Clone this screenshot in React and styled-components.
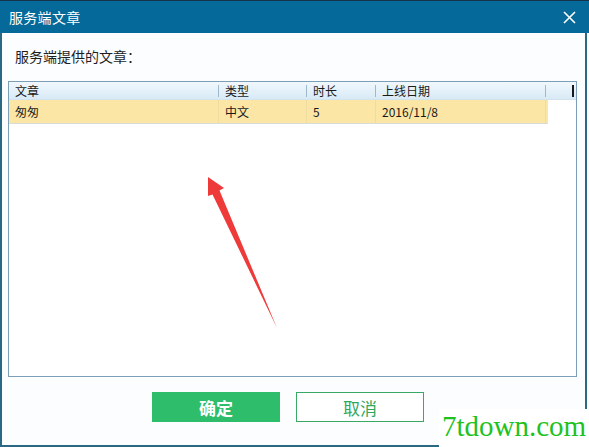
import React from "react"
import styled, { createGlobalStyle } from "styled-components"

const GlobalStyle = createGlobalStyle`
  html, body {
    margin: 0;
    padding: 0;
    background: #ffffff;
  }
  body {
    font-family: "Noto Sans CJK SC", "Liberation Sans", sans-serif;
  }
`

const columns = [
  { key: "title", label: "文章", width: 210 },
  { key: "lang", label: "类型", width: 88 },
  { key: "length", label: "时长", width: 69 },
  { key: "date", label: "上线日期", width: 170 },
]

const articles = [{ id: 1, title: "匆匆", lang: "中文", length: "5", date: "2016/11/8" }]

function App() {
  return (
    <>
      <GlobalStyle />
      <Window>
        <TitleBar>
          <Title>服务端文章</Title>
          <CloseButton aria-label="close">
            <svg width="13" height="13" viewBox="0 0 13 13">
              <path d="M1 1 L12 12 M12 1 L1 12" stroke="#fff" strokeWidth="1.6" />
            </svg>
          </CloseButton>
        </TitleBar>
        <Body>
          <Label>服务端提供的文章：</Label>
          <ListBox>
            <HeaderRow>
              {columns.map((col) => (
                <HeaderCell key={col.key} $width={col.width}>
                  {col.label}
                </HeaderCell>
              ))}
              <HeaderEnd />
            </HeaderRow>
            {articles.map((item) => (
              <DataRow key={item.id} $selected>
                {columns.map((col) => (
                  <DataCell key={col.key} $width={col.width}>
                    {item[col.key]}
                  </DataCell>
                ))}
              </DataRow>
            ))}
          </ListBox>
          <Footer>
            <Button $primary>确定</Button>
            <Button>取消</Button>
          </Footer>
        </Body>
        <Pointer width="589" height="447" viewBox="0 0 589 447">
          <path
            d="M208 177 L224 188 L219.5 190.5 L277 328 L212.5 194.5 L208 196 Z"
            fill="#ef3a3a"
          />
        </Pointer>
        <Watermark>7tdown.com</Watermark>
      </Window>
    </>
  )
}

export default App

const Window = styled.div`
  position: relative;
  width: 589px;
  height: 447px;
  display: flex;
  flex-direction: column;
  overflow: hidden;
`

const TitleBar = styled.div`
  height: 32px;
  flex: none;
  border-top: 1px solid #17334b;
  background: #056a99;
  display: flex;
  align-items: center;
  justify-content: space-between;
  padding: 0 13px 0 9px;
`

const Title = styled.span`
  color: #ffffff;
  font-size: 14px;
  letter-spacing: 0.3px;
`

const CloseButton = styled.span`
  display: flex;
  align-items: center;
`

const Body = styled.div`
  flex: 1;
  width: 583px;
  border-left: 2px solid #2a6983;
  border-right: 2px solid #2a6983;
  border-bottom: 2px solid #2a6983;
  background: #fbfdff;
  display: flex;
  flex-direction: column;
`

const Label = styled.div`
  height: 48px;
  line-height: 46px;
  padding-left: 13px;
  font-size: 14px;
  color: #1e1e1e;
`

const ListBox = styled.div`
  margin: 0 8px 0 6px;
  height: 294px;
  border: 1px solid #7a9fb6;
  background: #ffffff;
`

const HeaderRow = styled.div`
  height: 17px;
  display: flex;
  align-items: center;
  background: linear-gradient(#f1f8fd, #d8eaf6);
  border-bottom: 1px solid #d3e3ee;
`

const HeaderCell = styled.div`
  width: ${(p) => p.$width}px;
  flex: none;
  box-sizing: border-box;
  padding-left: 6px;
  font-size: 12px;
  line-height: 17px;
  color: #1a1a1a;
  border-right: 1px solid #9fb9ca;
  height: 12px;
  display: flex;
  align-items: center;
`

const HeaderEnd = styled.div`
  margin-left: 26px;
  width: 2px;
  height: 12px;
  background: #1a1a1a;
`

const DataRow = styled.div`
  display: flex;
  height: 23px;
  width: 539px;
  background: ${(p) => (p.$selected ? "#fbe6a6" : "#ffffff")};
  border-bottom: 1px solid #d7dcd8;
`

const DataCell = styled.div`
  width: ${(p) => p.$width}px;
  flex: none;
  box-sizing: border-box;
  padding-left: 6px;
  font-size: 12px;
  line-height: 23px;
  color: #1a1a1a;
  border-right: 1px solid #f0dca0;
`

const Footer = styled.div`
  display: flex;
  gap: 16px;
  padding: 15px 0 0 150px;
`

const Button = styled.div`
  width: 128px;
  height: 30px;
  box-sizing: border-box;
  display: flex;
  align-items: center;
  justify-content: center;
  font-size: 17px;
  font-weight: ${(p) => (p.$primary ? 700 : 400)};
  color: ${(p) => (p.$primary ? "#ffffff" : "#2fa85c")};
  background: ${(p) => (p.$primary ? "#2dbd6b" : "#ffffff")};
  border: 1px solid ${(p) => (p.$primary ? "#2dbd6b" : "#3aa866")};
`

const Pointer = styled.svg`
  position: absolute;
  left: 0;
  top: 0;
  pointer-events: none;
`

const Watermark = styled.div`
  position: absolute;
  right: 0;
  bottom: 0;
  width: 150px;
  height: 38px;
  background: #ffffff;
  box-sizing: border-box;
  padding-left: 3px;
  font-family: "Liberation Serif", serif;
  font-size: 29px;
  line-height: 34px;
  color: #1ec21e;
`
